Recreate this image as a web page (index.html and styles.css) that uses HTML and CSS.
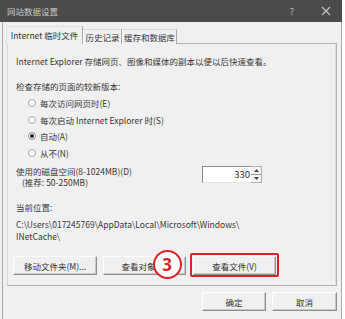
FILE: index.html
```html
<!DOCTYPE html>
<html lang="zh">
<head>
<meta charset="utf-8">
<link rel="stylesheet" href="styles.css">
</head>
<body>
<div class="window">
  <div class="titlebar">
    <span class="title">网站数据设置</span>
    <span class="help">?</span>
    <svg class="close" width="10" height="10" viewBox="0 0 10 10"><path d="M1 1 L9 9 M9 1 L1 9" stroke="#c4c4c4" stroke-width="1.1" fill="none"/></svg>
  </div>
  <div class="frame">
    <div class="tabs">
      <div class="tab active">Internet 临时文件</div>
      <div class="tab t2">历史记录</div>
      <div class="tab t3">缓存和数据库</div>
    </div>
    <div class="panel">
      <p class="desc">Internet Explorer 存储网页、图像和媒体的副本以便以后快速查看。</p>
      <p class="label">检查存储的页面的较新版本:</p>
      <ul class="radios">
        <li><span class="radio"></span>每次访问网页时(E)</li>
        <li><span class="radio"></span>每次启动 Internet Explorer 时(S)</li>
        <li><span class="radio checked"></span>自动(A)</li>
        <li><span class="radio"></span>从不(N)</li>
      </ul>
      <div class="disk">
        <div class="disk-text">
          <div>使用的磁盘空间(8-1024MB)(D)</div>
          <div class="indent">(推荐: 50-250MB)</div>
        </div>
        <div class="spin">
          <span class="spin-value">330</span>
          <span class="spin-arrows">
            <span class="arrow up"><svg width="5" height="3" viewBox="0 0 5 3"><path d="M0 3 L2.5 0 L5 3 Z" fill="#444"/></svg></span>
            <span class="arrow down"><svg width="5" height="3" viewBox="0 0 5 3"><path d="M0 0 L2.5 3 L5 0 Z" fill="#444"/></svg></span>
          </span>
        </div>
      </div>
      <p class="loc-label">当前位置:</p>
      <p class="path">C:\Users\017245769\AppData\Local\Microsoft\Windows\<br>INetCache\</p>
      <div class="actions">
        <button class="btn b1">移动文件夹(M)...</button>
        <button class="btn b2">查看对象(O)</button>
        <button class="btn b3 marked">查看文件(V)</button>
        <span class="badge">3</span>
      </div>
    </div>
    <div class="footer">
      <button class="btn ok">确定</button>
      <button class="btn cancel">取消</button>
    </div>
  </div>
</div>
</body>
</html>
```

FILE: styles.css
```css
* { box-sizing: border-box; margin: 0; padding: 0; }
html, body { width: 345px; height: 319px; overflow: hidden; background: #ffffff; }
body {
  font-family: "Noto Sans CJK SC", "Noto Sans", sans-serif;
  font-size: 8.5px;
  color: #383838;
}
.window {
  width: 342px;
  height: 319px;
  display: flex;
  flex-direction: column;
  background: #f0f0f0;
}
.titlebar {
  height: 22px;
  flex: none;
  background: #4b4b4b;
  display: flex;
  align-items: center;
  padding-left: 7px;
  padding-right: 11px;
  color: #c8c8c8;
}
.title { flex: 1; font-size: 8.5px; }
.help { width: 10px; text-align: center; margin-right: 24px; font-size: 9px; color: #b8b8b8; }
.close { display: block; }

.frame {
  flex: 1;
  margin-left: 2px;
  border-left: 1px solid #a9a9a9;
  border-right: 1px solid #a9a9a9;
  display: flex;
  flex-direction: column;
}
.tabs {
  display: flex;
  align-items: flex-end;
  margin-top: 5px;
  margin-left: 3px;
  height: 17px;
  position: relative;
  z-index: 1;
  margin-bottom: -1px;
}
.tab {
  height: 15px;
  line-height: 14px;
  text-align: center;
  background: #f0f0f0;
  border-top: 1px solid #d8d8d8;
  border-left: 1px solid #ffffff;
  border-right: 1px solid #a8a8a8;
  white-space: nowrap;
}
.tab.active {
  width: 77px;
  height: 18px;
  line-height: 16px;
  border-top: 1px solid #e0e0e0;
  border-left: 1px solid #e0e0e0;
}
.tab.t2 { width: 39px; }
.tab.t3 { width: 55px; }

.panel {
  margin-left: 4px;
  width: 330px;
  height: 243px;
  border: 1px solid #b4b4b4;
  border-left-color: #d8d8d8;
  box-shadow: inset -1px 0 0 #dcdcdc;
  padding: 11px 8px 0 8px;
}
.desc { line-height: 12px; white-space: nowrap; }
.label { margin-top: 13px; line-height: 12px; }
.radios { list-style: none; margin-top: 3px; margin-left: 12px; }
.radios li {
  height: 16.5px;
  display: flex;
  align-items: center;
  white-space: nowrap;
}
.radio {
  width: 8px;
  height: 8px;
  border-radius: 50%;
  border: 1px solid #a6a6a6;
  background: #ffffff;
  margin-right: 4px;
  display: flex;
  align-items: center;
  justify-content: center;
}
.radio.checked { border-color: #8a8a8a; }
.radio.checked::after {
  content: "";
  width: 4px;
  height: 4px;
  border-radius: 50%;
  background: #2a2a2a;
}

.disk { display: flex; margin-top: 4.5px; }
.disk-text { width: 186px; line-height: 11px; }
.indent { padding-left: 6px; }
.spin {
  display: flex;
  height: 17px;
  width: 61px;
  margin-top: 0.5px;
}
.spin-value {
  width: 49px;
  background: #ffffff;
  border-top: 1px solid #8a8a8a;
  border-left: 1px solid #8a8a8a;
  border-bottom: 1px solid #e4e4e4;
  text-align: right;
  padding-right: 1px;
  font-size: 9.5px;
  line-height: 15px;
  color: #2e2e2e;
}
.spin-arrows {
  width: 11px;
  display: flex;
  flex-direction: column;
  border: 1px solid #b0b0b0;
  border-left: none;
  background: #f4f4f4;
}
.arrow {
  flex: 1;
  display: flex;
  align-items: center;
  justify-content: center;
}
.arrow svg { display: block; }
.arrow.up { border-bottom: 1px solid #9a9a9a; }

.loc-label { margin-top: 13.5px; line-height: 12px; }
.path { margin-top: 5px; line-height: 12px; white-space: nowrap; }

.actions {
  display: flex;
  margin-top: 14px;
  margin-left: -3px;
  position: relative;
}
.btn {
  font-family: "Noto Sans CJK SC", "Noto Sans", sans-serif;
  font-size: 8.5px;
  color: #333333;
  height: 19px;
  background: #f0f0f0;
  border: 1px solid;
  border-color: #fdfdfd #8f8f8f #8f8f8f #fdfdfd;
  box-shadow: inset -1px -1px 0 #c9c9c9;
  text-align: center;
  white-space: nowrap;
  overflow: hidden;
}
.b1 { width: 84px; }
.b2 { width: 83px; margin-left: 6px; }
.b3 { width: 83px; margin-left: 7px; }
.marked { position: relative; overflow: visible; }
.marked::after {
  content: "";
  position: absolute;
  left: -4px;
  top: -4px;
  right: -4px;
  bottom: -3px;
  border: 2px solid #d6262b;
  border-radius: 2px;
}
.badge {
  position: absolute;
  left: 139.5px;
  top: -6.5px;
  width: 29px;
  height: 29px;
  border-radius: 50%;
  border: 2.5px solid #d6262b;
  background: #ffffff;
  color: #d6262b;
  font-family: "Noto Sans", "Liberation Sans", sans-serif;
  font-weight: 700;
  font-size: 17px;
  display: flex;
  align-items: center;
  justify-content: center;
  line-height: 1;
}

.footer {
  display: flex;
  justify-content: flex-end;
  margin-top: 6px;
  padding-right: 4px;
}
.ok { width: 64px; }
.cancel { width: 65px; margin-left: 6px; }
```
